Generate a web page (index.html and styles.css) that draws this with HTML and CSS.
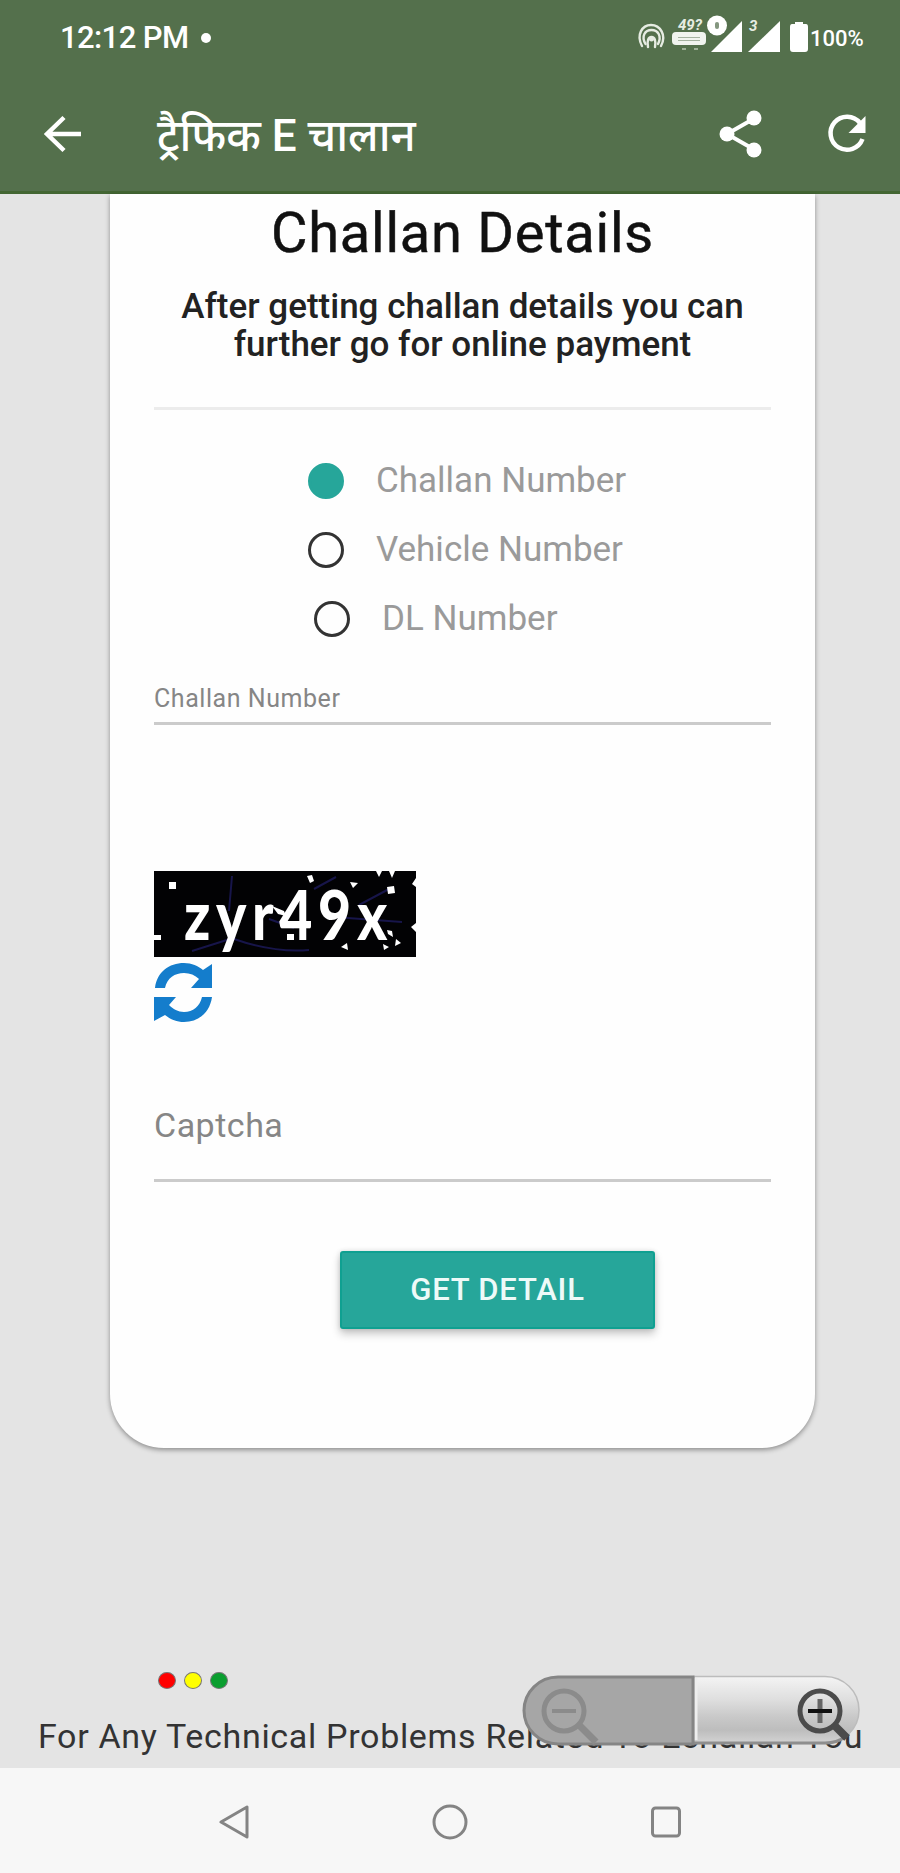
FILE: index.html
```html
<!DOCTYPE html>
<html lang="en">
<head>
<meta charset="utf-8">
<title>Traffic E Challan</title>
<link rel="stylesheet" href="styles.css">
</head>
<body>
<div class="screen">
  <header class="header">
    <div class="status">
      <span class="clock">12:12 PM</span><span class="notice"></span>
      <svg class="status-icons" width="174" height="44" viewBox="0 0 174 44">
        <g fill="none" stroke="#e6ece2" stroke-width="2.4" stroke-linecap="round">
          <path d="M6 32C0 21 6 11 15 11S31 21 25 32"/>
          <path d="M9.500 30C5 22 9 16 15.500 16S26 22 22 30"/>
          <path d="M12 33C11 27 12 23 15.500 23S20 27 19 33"/>
        </g>
        <circle cx="15.500" cy="25" r="2.500" fill="#e6ece2"/>
        <text class="tiny" x="42" y="16">49?</text>
        <rect x="36" y="18" width="34" height="13" rx="4" fill="#f1f4ef"/>
        <path d="M42 23.500h22M42 26.500h22" stroke="#a5b3a0" stroke-width="1"/>
        <path d="M46 35h4M58 35h4" stroke="#9fb098" stroke-width="2"/>
        <path d="M106 7v31H75z" fill="#fff"/>
        <circle cx="81" cy="11.500" r="10" fill="#fff"/>
        <rect x="79" y="8" width="4" height="7" rx="2" fill="#84967f"/>
        <text class="tiny" x="113" y="17">3</text>
        <path d="M144 7v31h-32z" fill="#fff"/>
        <path d="M156 10h3V8h8v2h3q2 0 2 3v22q0 3-3 3h-12q-3 0-3-3V13q0-3 2-3z" fill="#fff"/>
      </svg>
      <span class="battery">100%</span>
    </div>
    <div class="appbar">
      <svg class="back" width="42" height="42" viewBox="0 0 42 42" fill="none" stroke="#fff" stroke-width="4.500"><path d="M39 21H5M22 4.500L5 21l17 16.500"/></svg>
      <h1 class="page-title">ट्रैफिक E चालान</h1>
      <svg class="share" width="44" height="50" viewBox="0 0 44 50" fill="#fff"><path d="M36 9L8 25l28 16" fill="none" stroke="#fff" stroke-width="4"/><circle cx="35" cy="9" r="7.500"/><circle cx="8" cy="25" r="7.500"/><circle cx="35" cy="41" r="7.500"/></svg>
      <svg class="reload" width="40" height="40" viewBox="0 0 40 40"><path d="M33 9A16.500 16.500 0 1 0 35.500 25" fill="none" stroke="#fff" stroke-width="4.500"/><path d="M38.500 2v17h-17z" fill="#fff"/></svg>
    </div>
  </header>

  <main class="content">
    <section class="card">
      <h2 class="card-title">Challan Details</h2>
      <p class="lead">After getting challan details you can<br>further go for online payment</p>
      <div class="rule"></div>
      <div class="options">
        <label class="option"><span class="radio radio-on"></span><span>Challan Number</span></label>
        <label class="option"><span class="radio"></span><span>Vehicle Number</span></label>
        <label class="option option-dl"><span class="radio"></span><span>DL Number</span></label>
      </div>
      <div class="field field-number">Challan Number</div>
      <svg class="captcha" width="262" height="86" viewBox="0 0 262 86">
        <rect width="262" height="86" fill="#020204"/>
        <path d="M78 5L75 40M160 18l22-12M205 34l30-16M38 80l38-12M80 68q40 14 75 11M115 48l25 9M180 46l68 5" stroke="#17154a" stroke-width="2" fill="none"/>
        <text class="captcha-text" transform="translate(30 69) scale(.84 1)" textLength="242" lengthAdjust="spacing">zyr49x</text>
        <path d="M15 11h7v7h-7zM153 5l5-1 2 6-4 2zM196 11l8 1-5 5zM222 0h6l-3 6zM235 0h6l-3 7zM233 16l7-1 1 7-7 1zM262 7v9l-4-3zM262 52v9l-5-5zM0 64h7v5H0zM133 63h7v6h-7zM187 76l6-4 1 7zM233 59l5 1 1 6-5-3zM242 68l5 4-6 3zM229 73l6 3-5 3zM118 35l12 5 2 5-8-2z" fill="#fff"/>
      </svg>
      <svg class="refresh" width="60" height="62" viewBox="0 0 60 62"><g fill="#147dcc"><path d="M1 27C3 11 15 2 30 2c8 0 14 3 19 7l9-6v24H37l8-9c-4-4-9-6-15-6-9 0-17 5-19 15z"/><path d="M58 36C56 51 45 61 30 61c-8 0-14-3-19-7l-11 6V36h22l-7 8c4 4 9 7 15 7 9 0 16-6 18-15z"/></g></svg>
      <div class="field field-captcha">Captcha</div>
      <button class="submit">GET DETAIL</button>
    </section>

    <footer class="footer">
      <div class="lights"><i class="light red"></i><i class="light yellow"></i><i class="light green"></i></div>
      <p class="help">For Any Technical Problems Related To Echallan You</p>
      <svg class="zoom" width="340" height="72" viewBox="0 0 340 72">
        <defs><linearGradient id="shine" x1="0" y1="0" x2="0" y2="1"><stop offset="0" stop-color="#f4f4f4"/><stop offset=".35" stop-color="#dedede"/><stop offset=".6" stop-color="#c9c9c9"/><stop offset=".8" stop-color="#bdbdbd"/><stop offset="1" stop-color="#d4d4d4"/></linearGradient></defs>
        <path d="M172 1.500h131a34 33.500 0 0 1 0 67H172z" fill="url(#shine)" stroke="#bcbcbc" stroke-width="1.500"/>
        <path d="M172 68h131q12 0 20-6" stroke="#8e8e8e" stroke-width="3" fill="none"/>
        <path d="M174 3v62" stroke="#eee" stroke-width="3"/>
        <path d="M171 2H36a34 33.500 0 0 0 0 67h135z" fill="#a6a6a6" stroke="#858585" stroke-width="3"/>
        <g fill="none" stroke="#8b8b8b" stroke-width="5"><circle cx="42" cy="36" r="20"/><path d="M30 36h24" stroke-width="4"/><path d="M57 50l17 17" stroke-width="7"/></g>
        <g fill="none" stroke="#4b4b4b" stroke-width="5"><circle cx="298" cy="36" r="20"/><path d="M298 24v24" stroke="#666" stroke-width="5"/><path d="M286 36h24" stroke="#111" stroke-width="4"/><path d="M312 50l13 13" stroke-width="8"/></g>
      </svg>
    </footer>
  </main>

  <nav class="nav">
    <svg width="30" height="38" viewBox="0 0 30 38"><path d="M2 19L28 4v30z"/></svg>
    <svg width="38" height="38" viewBox="0 0 38 38"><circle cx="19" cy="19" r="16"/></svg>
    <svg width="30" height="38" viewBox="0 0 30 38"><rect x="1.500" y="5" width="27" height="28" rx="3"/></svg>
  </nav>
</div>
</body>
</html>
```
FILE: styles.css
```css
* { box-sizing: border-box; }
body { margin: 0; font-family: Roboto, "Noto Sans", sans-serif; }
h1, h2, p { margin: 0; font-weight: 400; }
svg { display: block; flex: none; }

.screen { width: 900px; height: 1873px; display: flex; flex-direction: column; background: #e4e4e4; overflow: hidden; }

.header { height: 194px; flex: none; background: #54704c; border-bottom: 3px solid #436633; color: #fff; }
.status { height: 76px; display: flex; align-items: center; padding-left: 60px; white-space: nowrap; }
.clock { width: 140px; font-size: 31px; font-weight: 500; line-height: 76px; letter-spacing: -.6px; }
.notice { width: 10px; height: 10px; border-radius: 50%; background: #fff; margin-left: 1px; }
.status-icons { margin-left: 425px; margin-top: -5px; }
.tiny { font-size: 15px; font-weight: 700; font-style: italic; fill: #e6ece2; }
.battery { font-size: 22px; font-weight: 500; }
.appbar { height: 115px; display: flex; align-items: center; padding: 0 0 0 42px; }
.page-title { font-size: 44px; font-weight: 500; line-height: 60px; margin-left: 73px; width: 562px; padding-top: 5px; white-space: nowrap; }
.reload { margin-left: 64px; }

.content { flex: 1; display: flex; flex-direction: column; }
.card { width: 705px; height: 1254px; margin-left: 110px; padding: 6px 44px 0; background: #fefefe; border-radius: 0 0 54px 54px; box-shadow: 0 2px 5px rgba(0,0,0,.38); }
.card-title { font-size: 56px; line-height: 66px; letter-spacing: .75px; text-align: center; color: #111; -webkit-text-stroke: .5px #111; }
.lead { margin-top: 22px; font-size: 35px; line-height: 38px; font-weight: 500; text-align: center; color: #222; white-space: nowrap; }
.rule { height: 3px; margin-top: 43px; background: #ececec; }
.options { margin-top: 36px; padding-left: 154px; }
.option { height: 69px; display: flex; align-items: center; gap: 32px; font-size: 35px; color: #9a9a9a; }
.option-dl { padding-left: 6px; }
.radio { width: 36px; height: 36px; border: 3px solid #333; border-radius: 50%; }
.radio-on { background: #26a69a; border-color: #26a69a; }
.field { color: #868686; border-bottom: 3px solid #cbcbcb; }
.field-number { margin-top: 31px; font-size: 25px; line-height: 30px; letter-spacing: .55px; padding-bottom: 8px; }
.captcha { margin-top: 146px; overflow: visible; }
.captcha-text { font-family: Lato, "Open Sans", sans-serif; font-size: 68px; font-weight: 900; fill: #fff; }
.refresh { margin-top: 4px; }
.field-captcha { margin-top: 82px; font-size: 34px; line-height: 40px; letter-spacing: .5px; padding-bottom: 34px; }
.submit { display: block; width: 315px; height: 78px; margin: 69px 0 0 186px; padding: 0 0 1px; border: 2px solid #0fa091; border-radius: 3px; background: #26a69a; color: #eefaf8; font: 500 31px Roboto, sans-serif; letter-spacing: .8px; box-shadow: 0 5px 8px rgba(0,0,0,.22), 0 0 5px rgba(0,0,0,.12); }

.footer { position: relative; margin-top: 224px; }
.lights { display: flex; gap: 8px; padding-left: 158px; }
.light { width: 18px; height: 17px; border: 1.5px solid #777; border-radius: 50%; }
.red { background: #f00; }
.yellow { background: #ff0; }
.green { background: #0a9e2f; }
.help { margin-top: 27px; padding-left: 38px; font-size: 34px; line-height: 40px; letter-spacing: .68px; color: #333; white-space: nowrap; }
.zoom { position: absolute; left: 522px; top: 3px; }

.nav { height: 105px; flex: none; display: flex; justify-content: center; align-items: center; gap: 182px; background: #f7f7f7; padding-top: 2px; }
.nav svg { fill: none; stroke: #848484; stroke-width: 3; stroke-linejoin: round; }
```
